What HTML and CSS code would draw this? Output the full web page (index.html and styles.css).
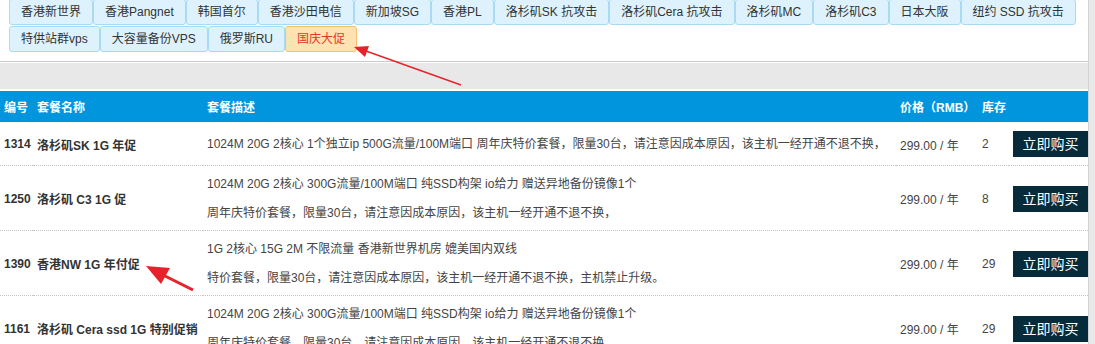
FILE: index.html
```html
<!DOCTYPE html>
<html lang="zh-cn">
<head>
    <meta charset="UTF-8">
    <title>国庆大促</title>
    <link rel="stylesheet" href="styles.css">
</head>
<body>
    <div class="wrap">
        <div class="page">
            <ul class="tabs">
                <li>香港新世界</li>
                <li>香港Pangnet</li>
                <li>韩国首尔</li>
                <li>香港沙田电信</li>
                <li>新加坡SG</li>
                <li>香港PL</li>
                <li>洛杉矶SK 抗攻击</li>
                <li>洛杉矶Cera 抗攻击</li>
                <li>洛杉矶MC</li>
                <li>洛杉矶C3</li>
                <li>日本大阪</li>
                <li>纽约 SSD 抗攻击</li>
                <li>特供站群vps</li>
                <li>大容量备份VPS</li>
                <li>俄罗斯RU</li>
                <li class="on">国庆大促</li>
            </ul>

            <div class="bar"><div class="bar-in"></div></div>

            <table class="plans">
                <colgroup>
                    <col style="width:33px">
                    <col style="width:170px">
                    <col style="width:693px">
                    <col style="width:82px">
                    <col style="width:31px">
                    <col style="width:79px">
                </colgroup>
                <thead>
                    <tr>
                        <th>编号</th>
                        <th>套餐名称</th>
                        <th>套餐描述</th>
                        <th>价格（RMB）</th>
                        <th>库存</th>
                        <th></th>
                    </tr>
                </thead>
                <tbody>
                    <tr>
                        <td class="id">1314</td>
                        <td class="name">洛杉矶SK 1G 年促</td>
                        <td class="desc"><p>1024M 20G 2核心 1个独立ip 500G流量/100M端口 周年庆特价套餐，限量30台，请注意因成本原因，该主机一经开通不退不换，</p></td>
                        <td>299.00 / 年</td>
                        <td>2</td>
                        <td><a class="buy" href="#">立即购买</a></td>
                    </tr>
                    <tr>
                        <td class="id">1250</td>
                        <td class="name">洛杉矶 C3 1G 促</td>
                        <td class="desc"><p>1024M 20G 2核心 300G流量/100M端口 纯SSD构架 io给力 赠送异地备份镜像1个</p><p>周年庆特价套餐，限量30台，请注意因成本原因，该主机一经开通不退不换，</p></td>
                        <td>299.00 / 年</td>
                        <td>8</td>
                        <td><a class="buy" href="#">立即购买</a></td>
                    </tr>
                    <tr>
                        <td class="id">1390</td>
                        <td class="name">香港NW 1G 年付促</td>
                        <td class="desc"><p>1G 2核心 15G 2M 不限流量 香港新世界机房 媲美国内双线</p><p>特价套餐，限量30台，请注意因成本原因，该主机一经开通不退不换，主机禁止升级。</p></td>
                        <td>299.00 / 年</td>
                        <td>29</td>
                        <td><a class="buy" href="#">立即购买</a></td>
                    </tr>
                    <tr>
                        <td class="id">1161</td>
                        <td class="name">洛杉矶 Cera ssd 1G 特别促销</td>
                        <td class="desc"><p>1024M 20G 2核心 300G流量/100M端口 纯SSD构架 io给力 赠送异地备份镜像1个</p><p>周年庆特价套餐，限量30台，请注意因成本原因，该主机一经开通不退不换，</p></td>
                        <td>299.00 / 年</td>
                        <td>29</td>
                        <td><a class="buy" href="#">立即购买</a></td>
                    </tr>
                </tbody>
            </table>

            <!-- red annotation arrows drawn over the page -->
            <svg class="marks" width="1088" height="344" viewBox="0 0 1088 344">
                <line x1="366" y1="51" x2="461" y2="85" stroke="#e8222a" stroke-width="1.4"/>
                <polygon points="354,47 369,46 365,57" fill="#e8222a"/>
                <line x1="163" y1="275" x2="193" y2="290" stroke="#e8222a" stroke-width="3"/>
                <polygon points="146,266 170,268 161,284" fill="#e8222a"/>
            </svg>
        </div>
        <div class="scroll"></div>
    </div>
</body>
</html>
```

FILE: styles.css
```css
body {
    margin: 0;
    overflow: hidden;
    background: #fff;
    color: #333;
    font-family: "Liberation Sans", "Noto Sans CJK SC", sans-serif;
    font-size: 12px;
}
.wrap {
    display: flex;
    min-height: 100vh;
}
.page {
    position: relative;
    width: 1088px;
}
.scroll {
    width: 6px;
    background: #e8e8e8;
    border-left: 1px solid #d2d2d2;
}
.tabs {
    display: flex;
    flex-wrap: wrap;
    row-gap: 1px;
    width: 1075px;
    margin: -1px 0 0 9px;
    padding: 0;
    list-style: none;
}
.tabs li {
    height: 24px;
    line-height: 24px;
    padding: 0 11px;
    border: 1px solid #a9daf3;
    border-radius: 3px;
    background: #ddf2fc;
    color: #333;
    white-space: nowrap;
}
.tabs li.on {
    background: #ffe2b1;
    border-color: #f7c06f;
    color: #e2391e;
}
.bar {
    margin-top: 9px;
    border-top: 1px solid #c8c8c8;
    padding: 1px 0 2px;
}
.bar-in {
    height: 26px;
    background: #e8e8e8;
}
.plans {
    width: 1088px;
    table-layout: fixed;
    border-collapse: collapse;
}
.plans th {
    height: 31px;
    padding: 0 4px;
    background: #0095dd;
    color: #fff;
    font-weight: bold;
    text-align: left;
    white-space: nowrap;
}
.plans td {
    padding: 9px 4px 8px;
    border-bottom: 1px dotted #c4c4c4;
    color: #444;
    white-space: nowrap;
    overflow: hidden;
}
.plans td.id,
.plans td.name {
    font-weight: bold;
    color: #333;
}
.desc p {
    margin: 0;
    line-height: 18px;
}
.desc p + p {
    margin-top: 11px;
}
.buy {
    display: block;
    width: 75px;
    height: 26px;
    line-height: 26px;
    background: #062b3b;
    color: #fff;
    font-size: 14px;
    text-align: center;
    text-decoration: none;
}
.marks {
    position: absolute;
    left: 0;
    top: 0;
    pointer-events: none;
}
```
